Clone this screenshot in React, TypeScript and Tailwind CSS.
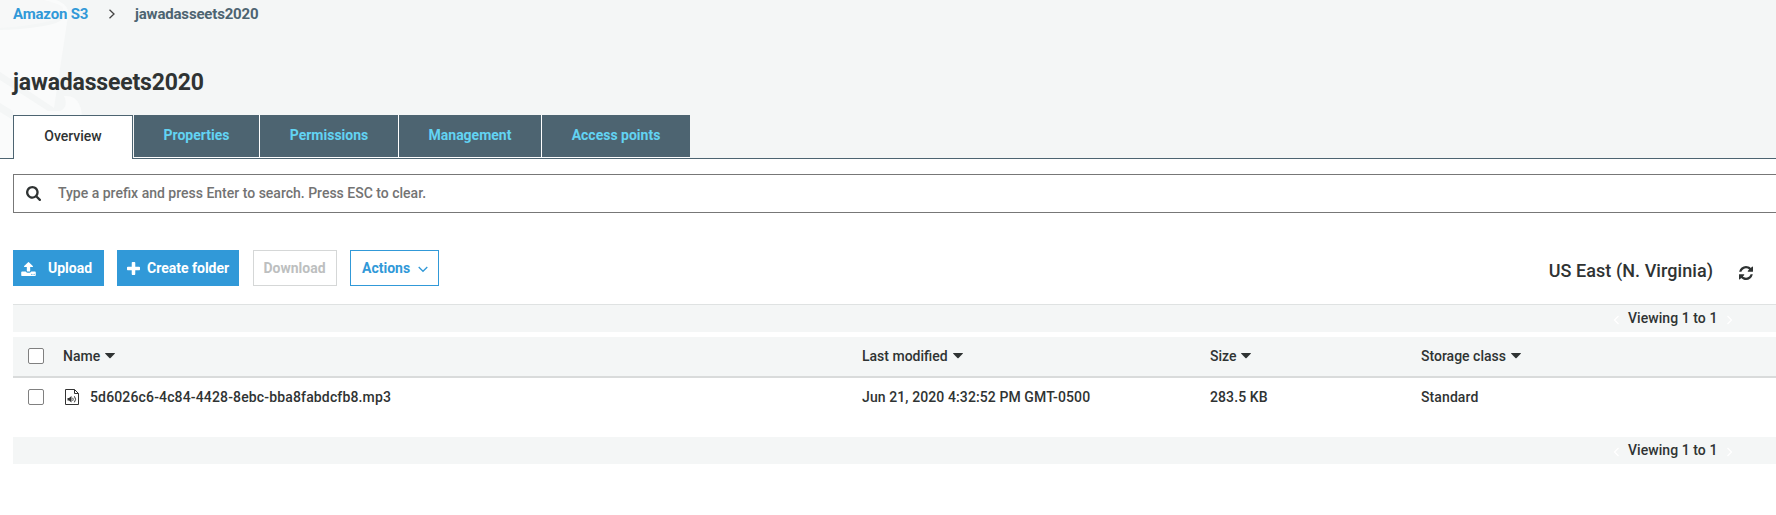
import type { ReactNode } from "react";

const PATHS = {
  search:
    "M1216 832q0-185-131.5-316.5T768 384 451.5 515.5 320 832t131.500 316.500T768 1280t316.500-131.500T1216 832zm512 832q0 52-38 90t-90 38q-54 0-90-38l-343-342q-179 124-399 124-143 0-273.500-55.500t-225-150-150-225T64 832t55.500-273.500 150-225 225-150T768 128t273.500 55.500 225 150 150 225T1472 832q0 220-124 399l343 343q37 37 37 90z",
  upload:
    "M1344 1472q0-26-19-45t-45-19-45 19-19 45 19 45 45 19 45-19 19-45zm256 0q0-26-19-45t-45-19-45 19-19 45 19 45 45 19 45-19 19-45zm128-224v320q0 40-28 68t-68 28h-1472q-40 0-68-28t-28-68v-320q0-40 28-68t68-28h427q21 56 70.5 92t110.5 36h256q61 0 110.5-36t70.5-92h427q40 0 68 28t28 68zm-325-648q-17 40-59 40h-256v448q0 26-19 45t-45 19h-256q-26 0-45-19t-19-45v-448h-256q-42 0-59-40-17-39 14-69l448-448q18-19 45-19t45 19l448 448q31 30 14 69z",
  plus: "M1408 608v192q0 40-28 68t-68 28H896v416q0 40-28 68t-68 28H608q-40 0-68-28t-28-68V896H96q-40 0-68-28T0 800V608q0-40 28-68t68-28h416V96q0-40 28-68t68-28h192q40 0 68 28t28 68v416h416q40 0 68 28t28 68z",
  refresh:
    "M1511 928q0 5-1 7-64 268-268 434.500t-478 166.500q-146 0-282.500-55t-243.500-157l-129 129q-19 19-45 19t-45-19-19-45v-448q0-26 19-45t45-19h448q26 0 45 19t19 45-19 45l-137 137q71 66 161 102t187 36q134 0 250-65t186-179q11-17 53-117 8-23 30-23h192q13 0 22.500 9.500t9.500 22.500zm25-800v448q0 26-19 45t-45 19h-448q-26 0-45-19t-19-45 19-45l138-138q-148-137-349-137-134 0-250 65t-186 179q-11 17-53 117-8 23-30 23h-199q-13 0-22.500-9.500t-9.500-22.500v-7q65-268 270-434.500t480-166.500q146 0 284 55.500t245 156.500l130-129q19-19 45-19t45 19 19 45z",
};

function Chevron({ d, className }: { d: string; className: string }) {
  return (
    <svg viewBox="0 0 10 10" fill="none" stroke="currentColor" className={className}>
      <path d={d} />
    </svg>
  );
}

function Tab({ children, width }: { children: ReactNode; width: string }) {
  return (
    <button className={`h-[42px] shrink-0 bg-[#4d6471] pb-[3px] font-bold text-[#62d3f3] ${width}`}>{children}</button>
  );
}

function Pager() {
  return (
    <div className="flex h-[27px] items-center bg-[#f4f6f6] pr-[42px]">
      <Chevron d="M6.500 1 2.500 5l4 4" className="mt-[3px] ml-auto size-[10px] stroke-[1.300] text-white" />
      <span className="ml-[6px] w-[88px] pb-[2px] tracking-[0.06px] whitespace-nowrap">Viewing 1 to 1</span>
      <Chevron d="M3.500 1l4 4-4 4" className="mt-[3px] ml-[8px] size-[10px] stroke-[1.300] text-white" />
    </div>
  );
}

function Checkbox() {
  return <span className="size-4 rounded-[2px] border border-[#808080] bg-white" />;
}

function Heading({ children }: { children: ReactNode }) {
  return (
    <span className="flex items-center gap-[5px] pb-[2px]">
      {children}
      <svg viewBox="0 0 10 6" className="mt-px h-[6px] w-[10px]" fill="currentColor">
        <path d="M.3 0h9.400q.5.200 0 .8L5.600 4.900q-.6.600-1.200 0L.3.800Q-.2.200.3 0z" />
      </svg>
    </span>
  );
}

const COLUMNS = "grid grid-cols-[50px_799px_348px_211px_1fr] items-center";

export default function App() {
  return (
    <div className="h-[515px] w-full overflow-hidden bg-white font-['Roboto',sans-serif] text-[14px] leading-[20px] font-medium text-[#2f3333]">
      <header className="relative flex h-[159px] flex-col border-b border-[#4d6471] bg-[#f4f6f6]">
        <svg className="absolute top-0 left-0 h-[158px] w-[90px]" viewBox="0 0 90 158" fill="#fafbfb">
          <path d="M0 0h56q14 5 12 16L54 108 0 72V30q36-1 56-7 13-6 7-13Q56 3 43 0z" />
          <path d="M0 80l48 31h12q9-4 4-15 11-1 15 8 4 7 2 17v37H0z" />
          <path d="M0 0h43q18 4 20 8 2 8-9 12-22 6-54 8z" fill="#f7f8f8" />
          <path d="M0 103l13 8v9L0 112z" fill="#f4f6f6" />
        </svg>
        <nav className="relative flex h-[28px] items-center pl-[13px] text-[15px] font-bold tracking-[-0.18px]">
          <span className="w-[75px] whitespace-nowrap text-[#3199d8]">Amazon S3</span>
          <Chevron d="M2.500.800 7 5 2.500 9.200" className="ml-[19px] size-[10px] stroke-[1.300] text-[#444]" />
          <span className="ml-[18px] text-[#4d6471]">jawadasseets2020</span>
        </nav>
        <h1 className="relative mt-[41px] pl-[13px] text-[23px] leading-[28px] font-bold tracking-[-0.18px]">
          jawadasseets2020
        </h1>
        <div className="relative mt-auto -mb-px flex items-start gap-px pl-[13px]">
          <button className="h-[44px] w-[120px] border border-b-0 border-[#4d6471] bg-white pb-[4px]">Overview</button>
          <div className="flex h-[43px] gap-px bg-white pb-px">
            <Tab width="w-[125px]">Properties</Tab>
            <Tab width="w-[138px]">Permissions</Tab>
            <Tab width="w-[142px]">Management</Tab>
            <Tab width="w-[148px]">Access points</Tab>
          </div>
        </div>
      </header>

      <main className="pl-[13px]">
        <div className="mt-[15px] flex h-[39px] items-center border border-r-0 border-[#777] pl-[12px] text-[#737373]">
          <svg viewBox="64 128 1664 1664" className="size-[15px] text-[#2f3333]" fill="currentColor">
            <path d={PATHS.search} />
          </svg>
          <span className="ml-[17px] pb-[2px]">Type a prefix and press Enter to search. Press ESC to clear.</span>
        </div>

        <div className="mt-[37px] flex h-[54px] items-start font-bold">
          <button className="flex h-[36px] w-[91px] items-center bg-[#3199d8] pl-[8px] text-white">
            <svg viewBox="64 64 1664 1600" className="mt-px h-[14px] w-[15px]" fill="currentColor">
              <path d={PATHS.upload} />
            </svg>
            <span className="ml-[12px]">Upload</span>
          </button>
          <button className="ml-[13px] flex h-[36px] w-[122px] items-center bg-[#3199d8] pl-[10px] text-white">
            <svg viewBox="0 0 1408 1408" className="size-[13px]" fill="currentColor">
              <path d={PATHS.plus} />
            </svg>
            <span className="ml-[7px] whitespace-nowrap">Create folder</span>
          </button>
          <button className="ml-[14px] h-[36px] w-[84px] border border-[#d5d7d7] pr-[7px] pl-[6px] text-[#bdbfbf]">
            Download
          </button>
          <button className="ml-[13px] flex h-[36px] w-[89px] items-center border border-[#3199d8] pl-[11px] text-[#3199d8]">
            Actions
            <Chevron d="M.7 3 5 7.300 9.300 3" className="mt-[2px] ml-[8px] size-[10px] stroke-[1.300]" />
          </button>
          <div className="ml-auto flex items-center pt-[11px] pr-[23px] font-medium">
            <span className="text-[18px] leading-[20px] tracking-[0.06px]">US East (N. Virginia)</span>
            <svg viewBox="0 0 1536 1536" className="mt-[3px] ml-[26px] size-[14px]" fill="currentColor">
              <path d={PATHS.refresh} />
            </svg>
          </div>
        </div>

        <div className="border-t border-[#dfe2e2]">
          <Pager />
        </div>

        <div className={`mt-[5px] h-[41px] border-b-2 border-[#d9dbdb] bg-[#f4f6f6] ${COLUMNS}`}>
          <span className="flex pb-px pl-[15px]">
            <Checkbox />
          </span>
          <Heading>Name</Heading>
          <Heading>Last modified</Heading>
          <Heading>Size</Heading>
          <Heading>Storage class</Heading>
        </div>
        <div className={`h-[59px] pb-[21px] ${COLUMNS}`}>
          <span className="flex pl-[15px]">
            <Checkbox />
          </span>
          <span className="flex items-center pl-[2px] tracking-[0.15px]">
            <svg viewBox="0 0 14 16" className="mr-[11px] h-[16px] w-[14px]" fill="none" stroke="#333">
              <path d="M.5.500h9l4 4v11H.500zM9.500.500v4h4" />
              <path d="M2.500 9h1.500L6.500 7v6.500L4 11.500H2.500z" fill="#333" stroke="none" />
              <path d="M7.700 8.800q1 1.500 0 3M9.400 7.300q2.400 3 0 6" />
            </svg>
            5d6026c6-4c84-4428-8ebc-bba8fabdcfb8.mp3
          </span>
          <span className="tracking-[0.1px]">Jun 21, 2020 4:32:52 PM GMT-0500</span>
          <span className="tracking-[0.1px]">283.5 KB</span>
          <span className="tracking-[0.1px]">Standard</span>
        </div>
        <Pager />
      </main>
    </div>
  );
}
